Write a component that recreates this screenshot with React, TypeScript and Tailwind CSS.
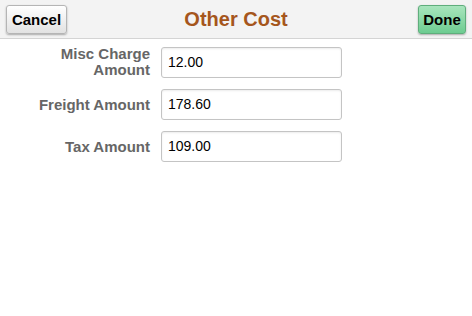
import React from "react";

const rows = [
  { label: ["Misc Charge", "Amount"], value: "12.00" },
  { label: ["Freight Amount"], value: "178.60" },
  { label: ["Tax Amount"], value: "109.00" },
];

export default function App() {
  return (
    <div className="w-[472px] h-[316px] bg-white" style={{ fontFamily: '"Liberation Sans", Arial, sans-serif' }}>
      <div className="h-[39px] bg-[#f3f3f3] border-b border-[#d4d4d4] grid grid-cols-[1fr_auto_1fr] items-center px-[6px]">
        <div className="flex justify-start">
          <button className="w-[61px] h-[29px] rounded-[3px] border border-[#b5b5b5] bg-gradient-to-b from-[#ffffff] to-[#e2e2e2] shadow-[0_1px_2px_rgba(0,0,0,0.3)] text-[15px] font-bold text-black leading-none">
            Cancel
          </button>
        </div>
        <div className="text-[20px] font-bold text-[#a5561c]">Other Cost</div>
        <div className="flex justify-end">
          <button className="w-[48px] h-[29px] rounded-[3px] border border-[#5fae7c] bg-gradient-to-b from-[#a8e5bd] to-[#6dcc91] shadow-[0_1px_2px_rgba(0,0,0,0.3)] text-[15px] font-bold text-black leading-none">
            Done
          </button>
        </div>
      </div>
      <div className="pt-[7px] flex flex-col gap-[11px]">
        {rows.map((r) => (
          <div key={r.value} className="flex items-center">
            <div className="w-[150px] text-right text-[15px] font-bold text-[#666666] leading-[16px]">
              {r.label.map((l) => (
                <div key={l}>{l}</div>
              ))}
            </div>
            <div className="ml-[11px] w-[181px] h-[31px] rounded-[3px] border border-[#c4c4c4] bg-white flex items-center px-[6px] text-[14px] text-black shadow-[inset_0_1px_2px_rgba(0,0,0,0.08)]">
              {r.value}
            </div>
          </div>
        ))}
      </div>
    </div>
  );
}
